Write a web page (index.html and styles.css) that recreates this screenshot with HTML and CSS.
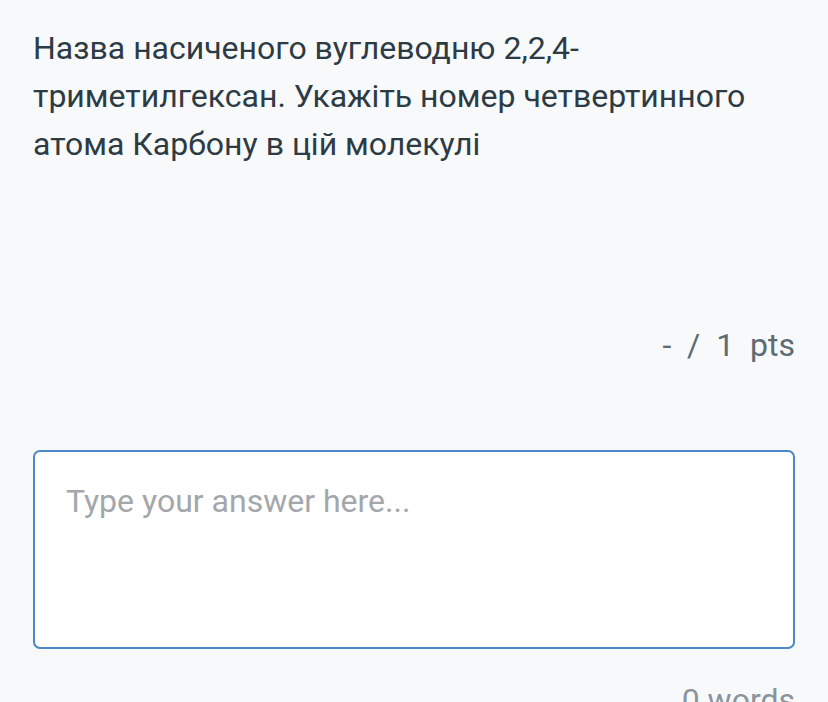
FILE: index.html
```html
<!DOCTYPE html>
<html lang="uk">

<head>
    <meta charset="UTF-8">
    <meta name="viewport" content="width=device-width, initial-scale=1.0">
    <title>Question</title>
    <link rel="stylesheet" href="styles.css">
</head>

<body>
    <div class="question">
        <p class="text">Назва насиченого вуглеводню 2,2,4-триметилгексан. Укажіть номер четвертинного атома Карбону в цій молекулі</p>
        <div class="points">- &nbsp;/ &nbsp;1 &nbsp;pts</div>
        <textarea class="answer" placeholder="Type your answer here..."></textarea>
        <div class="count">0 words</div>
    </div>
</body>

</html>
```

FILE: styles.css
```css
* {
    box-sizing: border-box;
}

body {
    margin: 0;
    background-color: #f8f9fb;
    font-family: Roboto, "Liberation Sans", Arial, sans-serif;
    color: #2d3b45;
}

.question {
    padding: 24px 33px 0 33px;
}

.text {
    margin: 0;
    font-size: 32px;
    line-height: 48px;
}

.points {
    margin-top: 158px;
    text-align: right;
    font-size: 32px;
    color: #5d6b75;
}

.answer {
    display: block;
    width: 100%;
    height: 199px;
    margin-top: 86px;
    padding: 30px 31px;
    border: 2px solid #4a88c8;
    border-radius: 7px;
    background: #fff;
    font-family: Roboto, "Liberation Sans", Arial, sans-serif;
    font-size: 32px;
    resize: none;
    outline: none;
}

.answer::placeholder {
    color: #a3a7ab;
}

.count {
    margin-top: 32px;
    text-align: right;
    font-size: 32px;
    color: #8a949b;
}
```
